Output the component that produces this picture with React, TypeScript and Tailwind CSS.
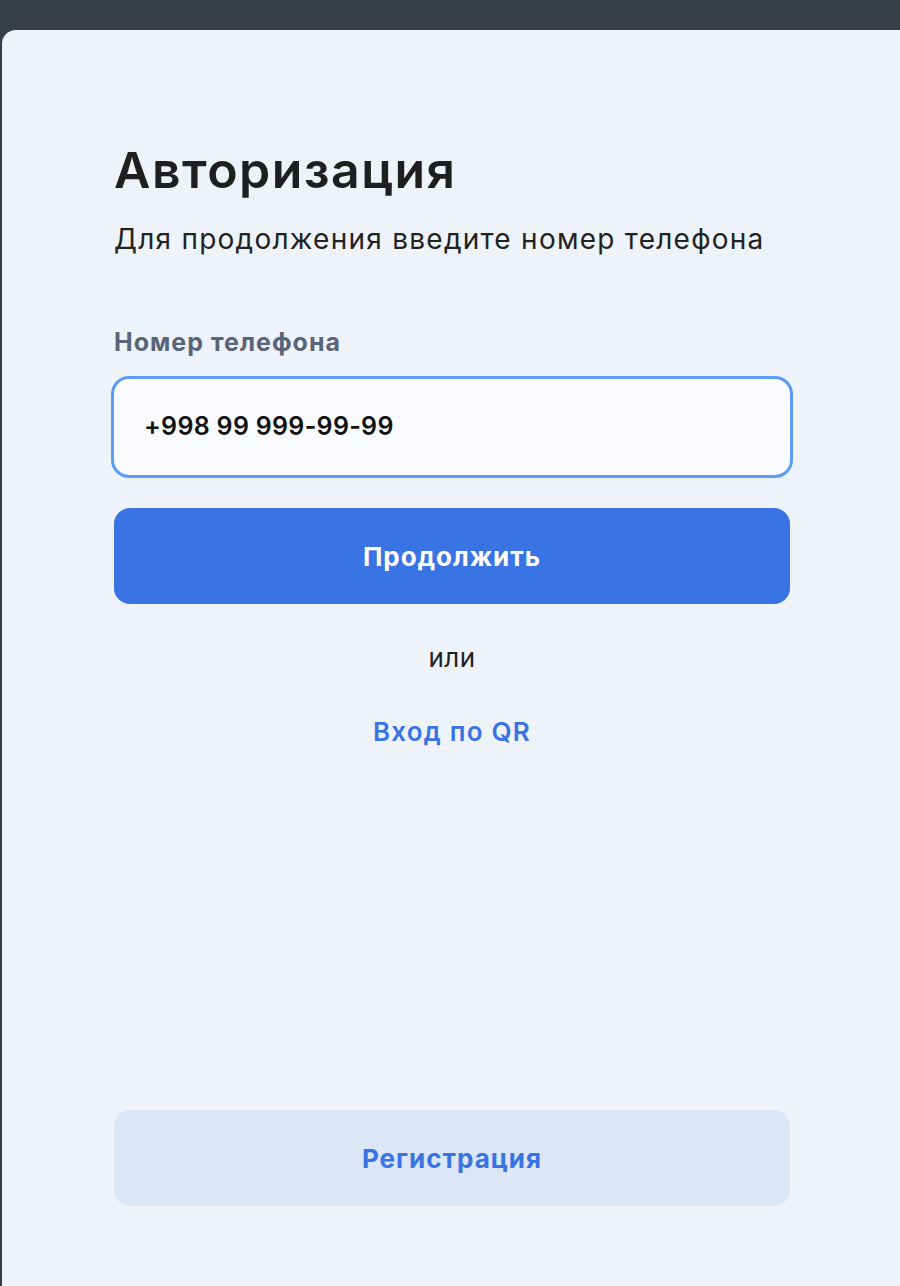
export default function App() {
  return (
    <div
      className="w-[900px] h-[1286px] overflow-hidden bg-[#373e48] pt-[30px] pl-[2px]"
      style={{ fontFamily: "Inter, 'Noto Sans', sans-serif" }}
    >
      <div className="w-[900px] h-[1256px] bg-[#eef3fa] rounded-tl-[14px] px-[112px] pt-[108px] pb-[80px] flex flex-col">
        <h1 className="text-[50px] leading-[64px] font-semibold text-[#1f1f1f] tracking-[1.5px]">Авторизация</h1>
        <p className="mt-[21px] text-[28px] leading-[32px] text-[#222] tracking-[1.25px]">
          Для продолжения введите номер телефона
        </p>

        <label className="mt-[73px] text-[25px] leading-[28px] font-bold text-[#5a6478] tracking-[1px]">
          Номер телефона
        </label>
        <div className="mt-[20px] -mx-[3px] h-[102px] rounded-[18px] border-[3px] border-[#5b9cf6] bg-[#f9fbfe] flex items-center px-[30px]">
          <span className="text-[25px] font-semibold text-[#111] tracking-[0.3px]">+998 99 999-99-99</span>
        </div>

        <button className="mt-[30px] h-[96px] w-full rounded-[16px] bg-[#3a73e4] text-white text-[26px] font-bold tracking-[1px]">
          Продолжить
        </button>

        <div className="mt-[39px] text-center text-[26px] leading-[30px] text-[#222] tracking-[0.5px]">или</div>
        <div className="mt-[44px] text-center text-[26px] leading-[30px] font-semibold text-[#3a73e4] tracking-[1.2px]">
          Вход по QR
        </div>

        <div className="flex-1" />
        <button className="h-[96px] w-full rounded-[16px] bg-[#dbe6f6] text-[#3a73e4] text-[26px] font-bold tracking-[1px]">
          Регистрация
        </button>
      </div>
    </div>
  )
}
